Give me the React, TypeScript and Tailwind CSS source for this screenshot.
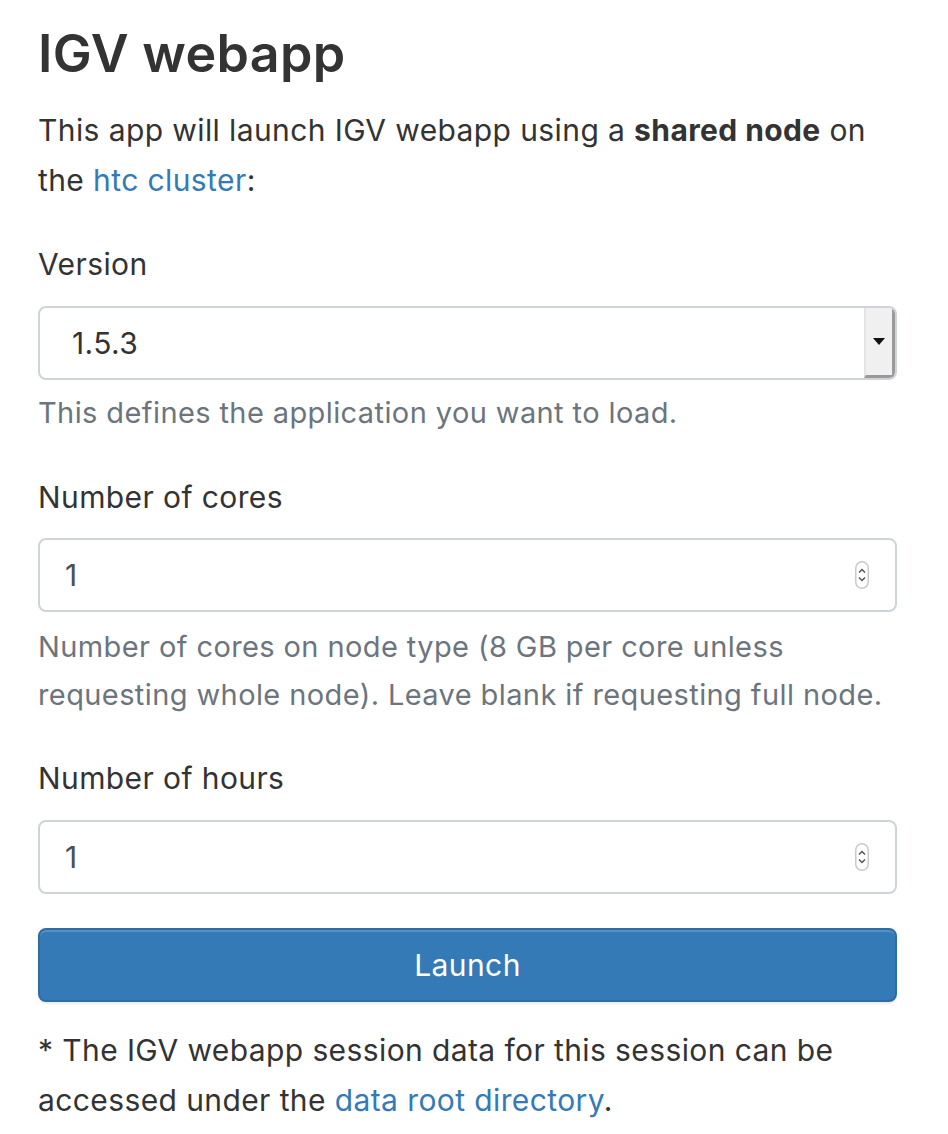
import { useState } from "react";

// Up/down spinner drawn like the macOS number input control
function Spinner() {
  return (
    <svg width="14" height="28" viewBox="0 0 14 28" className="shrink-0">
      <rect x="0.75" y="0.75" width="12.5" height="26.5" rx="6.25" fill="#fff" stroke="#c9c9c9" strokeWidth="1.5" />
      <path d="M4 11.5 L7 8.5 L10 11.5" fill="none" stroke="#555" strokeWidth="1.5" />
      <path d="M4 16.5 L7 19.5 L10 16.5" fill="none" stroke="#555" strokeWidth="1.5" />
    </svg>
  );
}

function NumberField({ value, onChange }: { value: string; onChange: (v: string) => void }) {
  return (
    <div className="flex items-center h-[74px] border-2 border-[#ced4da] rounded-[8px] bg-white pl-[25px] pr-[26px]">
      <input
        type="text"
        value={value}
        onChange={(e) => onChange(e.target.value)}
        className="flex-1 min-w-0 bg-transparent outline-none text-[30px] text-[#495057]"
      />
      <Spinner />
    </div>
  );
}

export default function App() {
  const [version, setVersion] = useState<string>("1.5.3");
  const [cores, setCores] = useState<string>("1");
  const [hours, setHours] = useState<string>("1");

  return (
    <div
      className="min-h-screen bg-white text-[#333] pl-[38px] pt-[24px]"
      style={{ fontFamily: "Inter, 'Liberation Sans', sans-serif" }}
    >
      <div className="w-[859px]">
        <h1 className="text-[52px] leading-[60px] font-semibold tracking-[0.3px]">IGV webapp</h1>

        <p className="mt-[21px] text-[30px] leading-[50px] tracking-[0.4px]">
          This app will launch IGV webapp using a <strong className="font-bold">shared node</strong> on
          the{" "}
          <a href="#" className="text-[#337ab7]">
            htc cluster
          </a>
          :
        </p>

        {/* Version */}
        <div className="mt-[34px]">
          <label className="block text-[30px] leading-[50px] tracking-[0.4px]">Version</label>
          <div className="mt-[17px] flex h-[74px] border-2 border-[#ced4da] rounded-[8px] bg-white overflow-hidden">
            <select
              value={version}
              onChange={(e) => setVersion(e.target.value)}
              className="flex-1 appearance-none bg-transparent outline-none pl-[32px] text-[30px] tracking-[0.4px] text-[#333]"
            >
              <option value="1.5.3">1.5.3</option>
            </select>
            <div className="w-[31px] flex items-center justify-center bg-[#f0f0f0] border-l-2 border-l-[#e4e4e4] border-r-[3px] border-r-[#9a9a9a] border-b-[3px] border-b-[#9a9a9a]">
              <svg width="12" height="7" viewBox="0 0 12 7">
                <path d="M0 0 L12 0 L6 7 Z" fill="#111" />
              </svg>
            </div>
          </div>
          <p className="mt-[9px] text-[29px] leading-[48px] tracking-[0.4px] text-[#6c757d]">
            This defines the application you want to load.
          </p>
        </div>

        {/* Cores */}
        <div className="mt-[35px]">
          <label className="block text-[30px] leading-[50px] tracking-[0.4px]">Number of cores</label>
          <div className="mt-[16px]">
            <NumberField value={cores} onChange={setCores} />
          </div>
          <p className="mt-[11px] text-[29px] leading-[48px] tracking-[0.4px] text-[#6c757d]">
            Number of cores on node type (8 GB per core unless requesting whole node). Leave blank if
            requesting full node.
          </p>
        </div>

        {/* Hours */}
        <div className="mt-[34px]">
          <label className="block text-[30px] leading-[50px] tracking-[0.4px]">Number of hours</label>
          <div className="mt-[17px]">
            <NumberField value={hours} onChange={setHours} />
          </div>
        </div>

        <button
          type="submit"
          className="mt-[34px] w-full h-[74px] rounded-[8px] bg-[#337ab7] border-2 border-[#2e6da4] text-white text-[30px] tracking-[0.4px] shadow-[inset_0_2px_0_rgba(255,255,255,0.18),0_2px_2px_rgba(0,0,0,0.08)]"
        >
          Launch
        </button>

        <p className="mt-[23px] text-[30px] leading-[50px] tracking-[0.4px]">
          * The IGV webapp session data for this session can be accessed under the{" "}
          <a href="#" className="text-[#337ab7]">
            data root directory
          </a>
          .
        </p>
      </div>
    </div>
  );
}
